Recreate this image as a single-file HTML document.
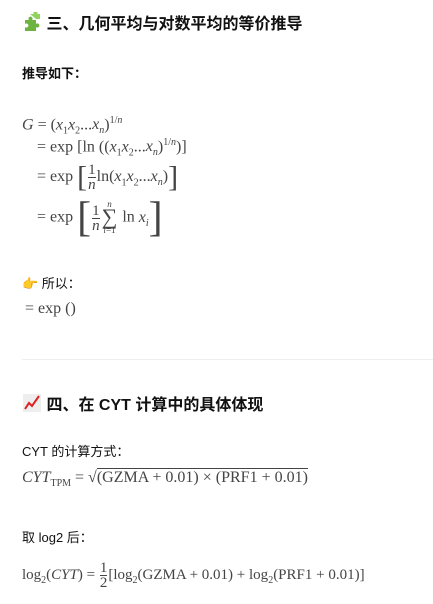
<!DOCTYPE html>
<html><head><meta charset="utf-8"><style>
body{margin:0;width:433px;height:604px;background:#fff;position:relative;overflow:hidden;font-family:"Liberation Sans","Noto Sans CJK SC",sans-serif;color:#111}
.a{position:absolute;white-space:nowrap}
.h{font-size:16px;font-weight:bold;line-height:20px}
.p{font-size:13px;line-height:18px}
.m{font-family:"Liberation Serif",serif;font-size:16px;color:#444;line-height:18px}
i{font-style:italic}
sub,sup{font-size:10px}
.fr{display:inline-block;vertical-align:middle;text-align:center;line-height:14px;font-size:15px;padding:0 1px}
.fr span{display:block}
.fr .n{border-bottom:1px solid #444}
.br{font-size:30px;font-weight:100;vertical-align:middle;line-height:20px}
</style></head><body>
<div class="a h" style="left:22px;top:12px"><svg width="20" height="20" viewBox="0 0 20 20" style="vertical-align:-3px"><path d="M3 8h4a2 2 0 1 1 3 0h4v4a2 2 0 1 1 0 3v4H3v-4a2 2 0 1 0 0-3z" fill="#6cb33f"/><path d="M8 2h4a2 2 0 1 1 3 0h3v5h-4" fill="#8fd35c"/></svg> 三、几何平均与对数平均的等价推导</div>
<div class="a p" style="left:22px;top:65px;font-weight:bold">推导如下：</div>
<div class="a m" style="left:22px;top:112px"><i>G</i> = (<i>x</i><sub>1</sub><i>x</i><sub>2</sub>...<i>x<sub>n</sub></i>)<sup>1/<i>n</i></sup></div>
<div class="a m" style="left:37px;top:134px">= exp [ln ((<i>x</i><sub>1</sub><i>x</i><sub>2</sub>...<i>x<sub>n</sub></i>)<sup>1/<i>n</i></sup>)]</div>
<div class="a m" style="left:37px;top:163px">= exp <span class="br">[</span><span class="fr"><span class="n">1</span><span><i>n</i></span></span>ln(<i>x</i><sub>1</sub><i>x</i><sub>2</sub>...<i>x<sub>n</sub></i>)<span class="br">]</span></div>
<div class="a m" style="left:37px;top:200px">= exp <span class="br" style="font-size:42px">[</span><span class="fr"><span class="n">1</span><span><i>n</i></span></span><span class="fr" style="font-size:22px;line-height:16px"><span style="font-size:9px;line-height:9px"><i>n</i></span><span>∑</span><span style="font-size:9px;line-height:11px"><i>i</i>=1</span></span> ln <i>x<sub>i</sub></i><span class="br" style="font-size:42px">]</span></div>
<div class="a p" style="left:22px;top:275px">👉 所以：</div>
<div class="a m" style="left:25px;top:300px">= exp ()</div>
<div class="a" style="left:22px;top:359px;width:411px;height:1px;background:#eee"></div>
<div class="a h" style="left:22px;top:393px"><svg width="20" height="20" viewBox="0 0 20 20" style="vertical-align:-3px"><rect x="1" y="1" width="18" height="18" fill="#eee"/><path d="M3 16l4-6 3 3 7-10" stroke="#d22" stroke-width="2" fill="none"/></svg> 四、在 CYT 计算中的具体体现</div>
<div class="a p" style="left:22px;top:443px">CYT 的计算方式：</div>
<div class="a m" style="left:22px;top:469px"><i>CYT</i><sub>TPM</sub> = √<span style="border-top:1px solid #444">(GZMA + 0.01) × (PRF1 + 0.01)</span></div>
<div class="a p" style="left:22px;top:529px">取 log2 后：</div>
<div class="a m" style="left:22px;top:561px;font-size:15px">log<sub>2</sub>(<i>CYT</i>) = <span class="fr"><span class="n">1</span><span>2</span></span>[log<sub>2</sub>(GZMA + 0.01) + log<sub>2</sub>(PRF1 + 0.01)]</div>
</body></html>
